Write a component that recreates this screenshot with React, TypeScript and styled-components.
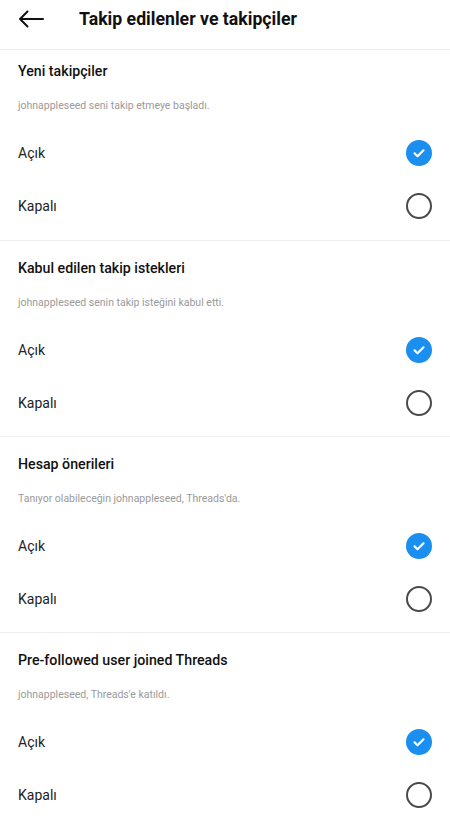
import * as React from "react";
import styled, { createGlobalStyle } from "styled-components";

const GlobalStyle = createGlobalStyle`
  html, body {
    margin: 0;
    padding: 0;
    background: #fff;
  }
  body {
    font-family: Roboto, "Noto Sans", sans-serif;
    color: #111;
  }
`;

const Page = styled.div`
  width: 450px;
  background: #fff;
`;

const Header = styled.div`
  height: 50px;
  box-sizing: border-box;
  padding: 0 0 12px 18px;
  display: flex;
  align-items: center;
  border-bottom: 1px solid #efefef;
`;

const BackButton = styled.div`
  width: 26px;
  height: 20px;
  display: flex;
  align-items: center;
`;

const Title = styled.div`
  margin-left: 35px;
  font-size: 17.7px;
  font-weight: 700;
  color: #111;
`;

const Section = styled.div<{ $first?: boolean }>`
  padding: ${(p) => (p.$first ? "11px 18px 8px" : "17px 18px 7px")};
  border-bottom: 1px solid #efefef;
  &:last-child {
    border-bottom: none;
  }
`;

const SectionTitle = styled.div`
  font-size: 14.2px;
  line-height: 20px;
  font-weight: 500;
  color: #111;
  margin-bottom: 17px;
`;

const Description = styled.div`
  font-size: 10.5px;
  line-height: 16px;
  color: #9a9a9a;
  margin-bottom: 12px;
`;

const Row = styled.div`
  height: 53px;
  display: flex;
  align-items: center;
  justify-content: space-between;
`;

const RowLabel = styled.span`
  font-size: 14px;
  color: #222;
`;

const Radio = styled.div<{ $on: boolean }>`
  width: 26px;
  height: 26px;
  box-sizing: border-box;
  border-radius: 50%;
  display: flex;
  align-items: center;
  justify-content: center;
  background: ${(p) => (p.$on ? "#1b8ff0" : "transparent")};
  border: ${(p) => (p.$on ? "none" : "2px solid #4a4a4a")};
`;

const sections = [
  { title: "Yeni takipçiler", desc: "johnappleseed seni takip etmeye başladı." },
  { title: "Kabul edilen takip istekleri", desc: "johnappleseed senin takip isteğini kabul etti." },
  { title: "Hesap önerileri", desc: "Tanıyor olabileceğin johnappleseed, Threads'da." },
  { title: "Pre-followed user joined Threads", desc: "johnappleseed, Threads'e katıldı." },
];

function Option({ label, on }: { label: string; on: boolean }) {
  return (
    <Row>
      <RowLabel>{label}</RowLabel>
      <Radio $on={on}>
        {on && (
          <svg width="14" height="14" viewBox="0 0 14 14">
            <path d="M2.5 7.3l3 3 6-6" fill="none" stroke="#fff" strokeWidth="2.2" strokeLinecap="round" strokeLinejoin="round" />
          </svg>
        )}
      </Radio>
    </Row>
  );
}

export default function App() {
  return (
    <Page>
      <GlobalStyle />
      <Header>
        <BackButton>
          <svg width="26" height="20" viewBox="0 0 26 20">
            <path d="M25 10H2 M9.5 2.5L2 10l7.5 7.5" fill="none" stroke="#111" strokeWidth="2" strokeLinecap="round" strokeLinejoin="round" />
          </svg>
        </BackButton>
        <Title>Takip edilenler ve takipçiler</Title>
      </Header>
      {sections.map((s, i) => (
        <Section key={s.title} $first={i === 0}>
          <SectionTitle>{s.title}</SectionTitle>
          <Description>{s.desc}</Description>
          <Option label="Açık" on />
          <Option label="Kapalı" on={false} />
        </Section>
      ))}
    </Page>
  );
}
